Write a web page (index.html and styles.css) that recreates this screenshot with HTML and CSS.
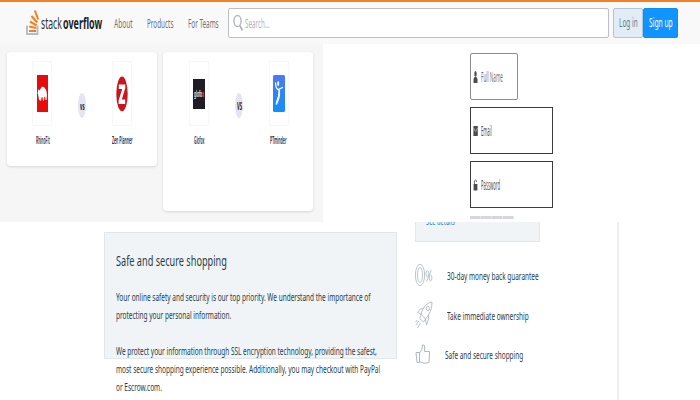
FILE: index.html
```html
<!DOCTYPE html>
<html lang="en">
<head>
<meta charset="utf-8">
<title>Stack Overflow</title>
<link rel="stylesheet" href="styles.css">
</head>
<body>
<header class="topbar">
  <a class="logo">
    <svg class="logo-mark" width="13" height="28" viewBox="0 0 13 28">
      <path d="M1 17.500V26H11.500V17.500" fill="none" stroke="#bcbbbb" stroke-width="1.900"/>
      <g stroke="#f48024" stroke-width="2.100" fill="none"><path d="M3 23H10M3.200 18.500L10.200 20M4 13.500L10.600 17.500M5.500 8L11.200 14.500M8.800 2.500L12.200 11.500"/></g>
    </svg>
    <span class="logo-text"><span class="sq logo-thin">stack</span></span>
    <span class="logo-text bold"><span class="sq logo-bold">overflow</span></span>
  </a>
  <nav class="nav">
    <a class="nav-about"><span class="sq s-about">About</span></a>
    <a class="nav-products"><span class="sq s-products">Products</span></a>
    <a class="nav-teams"><span class="sq s-teams">For Teams</span></a>
  </nav>
  <div class="search">
    <svg width="11" height="18" viewBox="0 0 11 18" fill="none" stroke="#b5b8bb" stroke-width="1.400"><ellipse cx="4.500" cy="7" rx="3.600" ry="5.500"/><path d="M6.800 11.500L9.500 16.500" stroke-width="1.800"/></svg>
    <span class="sq s-search">Search...</span>
  </div>
  <a class="btn login"><span class="sq s-login">Log in</span></a>
  <a class="btn signup"><span class="sq s-signup">Sign up</span></a>
</header>

<div class="middle">
  <section class="compare">
    <article class="card">
      <div class="item">
        <div class="thumb">
          <svg width="11" height="37" viewBox="0 0 11 37"><path fill="#e60c0c" d="M0 0H11V37H0z"/><path fill="#fff" d="M.6 18L1.500 14 2.500 15.500 4 13 5 11.500 7.500 12.500 9.300 15.500 10 20 9.500 25H8.600L8.200 21.500 7.300 22 7 25.500H6L5.500 22 4.500 22.500 4 26.500 3 24.500 2 25.500 1.500 21.500z"/></svg>
        </div>
        <span class="name"><span class="sq s-rhino">RhinoFit</span></span>
      </div>
      <span class="vs"><span class="sq s-vs">vs</span></span>
      <div class="item right">
        <div class="thumb">
          <svg width="12" height="36" viewBox="0 0 12 36"><ellipse cx="6" cy="18" rx="5.700" ry="17.500" fill="#c9151e"/><path fill="#fff" d="M2.800 8.500H9.300V12L5.800 23.500H9.200V28H2.600V24.500L6.200 13H2.800z"/></svg>
        </div>
        <span class="name"><span class="sq s-zen">Zen Planner</span></span>
      </div>
    </article>
    <article class="card tall">
      <div class="item">
        <div class="thumb">
          <div class="glofox"><span class="sq s-fox">glofo<b>x</b></span></div>
        </div>
        <span class="name"><span class="sq s-glofox">Glofox</span></span>
      </div>
      <span class="vs"><span class="sq s-vs">VS</span></span>
      <div class="item right">
        <div class="thumb">
          <svg width="12" height="37" viewBox="0 0 12 37"><defs><linearGradient id="b" x2="0" y2="1"><stop stop-color="#4e79f0"/><stop offset="1" stop-color="#128ff8"/></linearGradient></defs><rect width="12" height="37" rx="1.500" fill="url(#b)"/><ellipse cx="5.200" cy="8.500" rx="1" ry="2.600" fill="#fff"/><g fill="none" stroke="#fff" stroke-linecap="round"><path stroke-width="1.300" d="M2.500 8Q3 14.500 5.500 14.500L9.500 12.500"/><path stroke-width="1.500" d="M6.200 15Q6.500 21 3.500 28M6.500 19Q6 24 3.500 29"/></g></svg>
        </div>
        <span class="name"><span class="sq s-pt">PTminder</span></span>
      </div>
    </article>
  </section>
  <form class="signup-form">
    <div class="field short">
      <svg width="5" height="14" viewBox="0 0 5 14" fill="#4c4b52"><ellipse cx="2.500" cy="4" rx="1.200" ry="3"/><path d="M.5 13V9L1.500 7H3.500L4.500 9V13z"/></svg>
      <span class="sq s-full">Full Name</span>
    </div>
    <div class="field">
      <svg width="5" height="14" viewBox="0 0 5 14"><path fill="#4c4b52" d="M.4 2H4.800V12H.4z"/><path d="M.5 4L2.600 7.500 4.700 4" fill="none" stroke="#c9c9cc" stroke-width=".7"/></svg>
      <span class="sq s-email">Email</span>
    </div>
    <div class="field">
      <svg width="5" height="14" viewBox="0 0 5 14"><path fill="#4c4b52" d="M.6 6H4.400V12.500H.6z"/><path d="M1.400 6V4Q1.500 2 2.500 2T3.500 4" fill="none" stroke="#4c4b52" stroke-width=".8"/></svg>
      <span class="sq s-pass">Password</span>
    </div>
    <div class="strength"><i></i><i></i><i></i><i></i></div>
  </form>
</div>

<div class="bottom">
  <section class="safe">
    <h2><span class="sq s-title">Safe and secure shopping</span></h2>
    <p><span class="sq s-para">Your online safety and security is our top priority. We understand the importance of<br>protecting your personal information.<br><br>We protect your information through SSL encryption technology, providing the safest,<br>most secure shopping experience possible. Additionally, you may checkout with PayPal<br>or Escrow.com.</span></p>
  </section>
  <aside class="perks">
    <div class="details"><a class="sq s-details">See details</a></div>
    <ul>
      <li>
        <svg width="18" height="28" viewBox="0 0 18 28" fill="none" stroke="#a9b7bd" stroke-width=".8"><ellipse cx="5" cy="14" rx="4.600" ry="10.700"/><ellipse cx="5" cy="14" rx="2.500" ry="7.500"/><ellipse cx="12.200" cy="12.500" rx="1.300" ry="3"/><ellipse cx="15.600" cy="17" rx="1.300" ry="3"/><path d="M16.300 9L11.500 20.500"/></svg>
        <span class="sq s-p1">30-day money back guarantee</span>
      </li>
      <li>
        <svg width="18" height="28" viewBox="0 0 18 28" fill="none" stroke="#a3b1b8" stroke-width=".8"><path d="M17 1Q9 2 6 13L10.500 18Q17 11 17 1zM8.500 7.500Q5 6.500 2.500 11.500L6 13M13.700 13.500Q14 19 11.500 24L10.500 18M6 13L4.800 17.500 8.500 21 10.500 18M3.500 20L1 24M5.500 22L2.500 27M2 19L.6 21"/><ellipse cx="12.800" cy="7.500" rx="1.600" ry="2.200"/></svg>
        <span class="sq s-p2">Take immediate ownership</span>
      </li>
      <li class="last">
        <svg width="18" height="28" viewBox="0 0 18 28" fill="none" stroke="#a3b1b8" stroke-width=".9"><path d="M1 12.500H4.500V22.500H2L1 12.500zM4.500 13Q7.500 10.500 7.500 5Q9.600 4 9.600 7V11.500H14.600L14 22.500Q9 24.500 4.500 21.500"/></svg>
        <span class="sq s-p3">Safe and secure shopping</span>
      </li>
    </ul>
  </aside>
  <div class="divider"></div>
</div>
</body>
</html>
```
FILE: styles.css
```css
* { box-sizing: border-box; }
body {
  margin: 0;
  width: 700px;
  height: 400px;
  overflow: hidden;
  background: #fff;
  font-family: "Noto Sans", "Open Sans", sans-serif;
}
svg { flex: none; }
/* horizontally condensed text */
.sq {
  display: inline-block;
  white-space: nowrap;
  transform-origin: 0 50%;
  transform: scaleX(var(--s));
}

.topbar {
  display: flex;
  height: 44px;
  border-top: 2px solid #f48024;
  background: #f9f9f9;
  padding-left: 26px;
  font-size: 12px;
}
.logo { display: flex; width: 88px; padding-top: 6px; }
.logo-mark { flex: none; margin-right: 2px; }
.logo-text { flex: none; width: 22px; font-size: 16px; line-height: 31px; color: #333; }
.logo-text.bold { width: 40px; font-weight: 700; color: #222; }
.logo-thin { --s: .54; }
.logo-bold { --s: .56; }
.nav { display: flex; width: 114px; line-height: 43px; color: #6f7479; }
.nav a { flex: none; }
.nav-about { width: 33px; }
.nav-products { width: 41px; }
.nav-teams { width: 40px; }
.s-about { --s: .55; }
.s-products { --s: .53; }
.s-teams { --s: .53; }
.search {
  display: flex;
  align-items: center;
  width: 381px;
  height: 30px;
  margin-top: 6px;
  padding-left: 4px;
  border: 1px solid #bbc0c4;
  border-radius: 2px;
  background: #fff;
  color: #b2b5b8;
}
.search svg { margin-right: 1px; }
.s-search { --s: .52; }
.btn {
  width: 30px;
  height: 30px;
  margin: 6px 0 0 4px;
  padding-left: 5px;
  border: 1px solid #b3c6d5;
  border-radius: 2px;
  background: #e1ecf4;
  color: #5b7d99;
  line-height: 28px;
  overflow: hidden;
}
.btn.signup { width: 35px; margin-left: 0; border-color: #0f8df5; background: #1094ff; color: #fff; }
.s-login { --s: .54; }
.s-signup { --s: .56; }

.middle { display: flex; height: 178px; }
.compare {
  display: flex;
  align-items: flex-start;
  gap: 6px;
  width: 323px;
  padding: 8px 0 0 7px;
  background: #f6f6f6;
}
.card {
  display: flex;
  width: 150px;
  height: 114px;
  padding: 9px 0 0 25px;
  border-radius: 4px;
  background: #fff;
  box-shadow: 0 1px 3px rgba(0, 0, 0, .13);
}
.card.tall { height: 159px; padding-left: 26px; }
.item { width: 46px; }
.item.right { width: 22px; margin-left: 26px; }
.thumb {
  display: flex;
  align-items: center;
  justify-content: center;
  width: 20px;
  height: 65px;
  border: 1px solid #f7f7f7;
}
.name {
  display: block;
  margin-left: 4px;
  height: 28px;
  font-size: 11px;
  font-weight: 600;
  line-height: 28px;
  color: #2e2a48;
}
.tall .name { margin-left: 5px; }
.right .name { margin-left: 0; }
.tall .right .name { margin-left: 1px; }
.s-rhino { --s: .31; }
.s-zen { --s: .32; }
.s-glofox { --s: .3; }
.s-pt { --s: .32; }
.vs {
  width: 8px;
  height: 25px;
  margin-top: 32px;
  padding-left: 1.5px;
  border-radius: 50%;
  background: #e6e4f2;
  font-size: 10px;
  font-weight: 700;
  line-height: 27px;
  color: #17152a;
}
.s-vs { --s: .42; }
.glofox {
  width: 12px;
  height: 30px;
  background: #201c26;
  color: #fff;
  font-size: 8px;
  font-weight: 600;
  line-height: 29px;
  padding-left: 1px;
}
.glofox b { color: #e5392e; }
.s-fox { --s: .4; }

.signup-form { padding: 9px 0 0 147px; width: 377px; }
.field {
  display: flex;
  align-items: center;
  width: 83px;
  height: 47px;
  margin-bottom: 7px;
  padding-left: 2px;
  border: 1px solid #3c3c42;
  background: #fff;
  color: #55535c;
  font-size: 14px;
}
.field.short { width: 48px; border-color: #8b8b90; border-radius: 2px; color: #77757d; }
.field svg { margin-right: 3px; }
.s-full { --s: .33; }
.s-email { --s: .3; }
.s-pass { --s: .3; }
.strength { display: flex; width: 44px; margin-top: 8px; }
.strength i { flex: 1; height: 3px; border-right: 1px solid #e7e3e9; background: #d9d3db; }

.bottom { display: flex; height: 178px; color: #25404b; }
.safe {
  width: 293px;
  height: 127px;
  margin: 10px 18px 0 104px;
  padding: 0 0 0 11px;
  border: 1px solid #e1e7eb;
  background: #f0f4f7;
}
.safe h2 { margin: 14px 0 0; height: 26px; font-size: 15px; font-weight: 400; line-height: 26px; color: #1f3f4c; }
.s-title { --s: .61; }
.safe p { margin: 15px 0 0; font-size: 11px; line-height: 18px; }
.s-para { --s: .59; }
.perks { width: 202px; font-size: 11px; }
.details {
  width: 125px;
  height: 20px;
  padding-left: 10px;
  overflow: hidden;
  border: 1px solid #e1e7eb;
  border-top: 0;
  background: #f0f4f7;
  color: #2f8fb0;
  line-height: 15px;
}
.details a { display: block; width: max-content; margin-top: -9px; }
.s-details { --s: .52; }
.perks ul { margin: 19px 0 0; padding: 0; list-style: none; }
.perks li { display: flex; align-items: center; height: 28px; margin-bottom: 12px; }
.perks li svg { flex: none; margin-right: 14px; }
.perks li.last { margin-top: -1px; }
.perks .last svg { margin-right: 12px; }
.s-p1, .s-p2, .s-p3 { --s: .587; }
.divider { width: 2px; background: #eee; }
```
